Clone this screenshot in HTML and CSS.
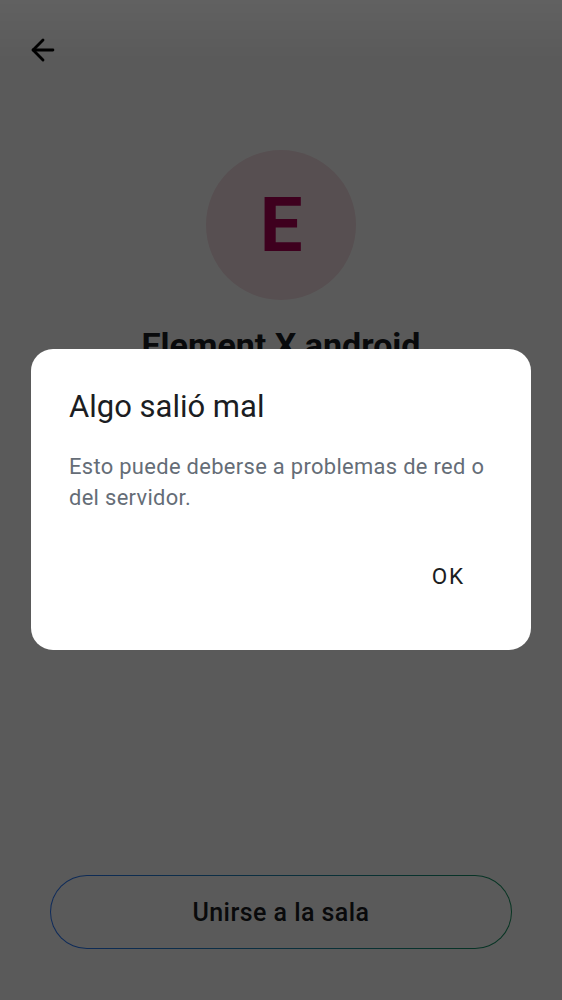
FILE: index.html
```html
<!DOCTYPE html>
<html lang="es">
<head>
<meta charset="utf-8">
<title>Unirse a la sala</title>
<link rel="stylesheet" href="styles.css">
</head>
<body>
<div class="screen">
  <header class="topbar">
    <button class="icon-btn" aria-label="Atrás">
      <svg viewBox="0 0 24 24" width="34" height="34" fill="none" stroke="#000" stroke-width="2" stroke-linecap="round" stroke-linejoin="round"><path d="M19 12H5"/><path d="M12 19l-7-7 7-7"/></svg>
    </button>
  </header>
  <div class="avatar"><span>E</span></div>
  <h1 class="room-name">Element X android</h1>
  <div class="spacer"></div>
  <button class="join-btn">Unirse a la sala</button>
</div>

<div class="scrim">
  <div class="dialog" role="alertdialog">
    <h2 class="dialog-title">Algo salió mal</h2>
    <p class="dialog-body">Esto puede deberse a problemas de red o del servidor.</p>
    <div class="dialog-actions">
      <button class="text-btn">OK</button>
    </div>
  </div>
</div>
</body>
</html>
```

FILE: styles.css
```css
* { box-sizing: border-box; }
html, body { margin: 0; padding: 0; }
body {
  width: 562px;
  height: 1000px;
  overflow: hidden;
  background: #ffffff;
  font-family: Roboto, "Liberation Sans", sans-serif;
  color: #1b1d22;
}
button { font-family: inherit; }

.screen {
  height: 1000px;
  display: flex;
  flex-direction: column;
  align-items: center;
}

.topbar {
  width: 100%;
  height: 100px;
  padding: 33px 0 0 26px;
}
.icon-btn {
  border: 0;
  background: transparent;
  padding: 0;
  width: 34px;
  height: 34px;
  display: block;
}
.icon-btn svg { display: block; }

.avatar {
  margin-top: 50px;
  width: 150px;
  height: 150px;
  border-radius: 50%;
  background: #f6e0e5;
  display: flex;
  align-items: center;
  justify-content: center;
}
.avatar span {
  font-size: 76px;
  font-weight: 700;
  color: #b10055;
  line-height: 1;
}

.room-name {
  margin: 25px 0 0;
  font-size: 34px;
  line-height: 40px;
  font-weight: 700;
  color: #1b1d22;
}

.spacer { flex: 1; }

.join-btn {
  width: 462px;
  height: 74px;
  margin-bottom: 51px;
  border-radius: 37px;
  border: 1.5px solid transparent;
  background:
    linear-gradient(#ffffff, #ffffff) padding-box,
    linear-gradient(90deg, #2a78ff, #14945f) border-box;
  font-size: 25px;
  font-weight: 500;
  color: #1b1d22;
  letter-spacing: 0.45px;
}

.scrim {
  position: fixed;
  inset: 0;
  background: linear-gradient(rgba(0,0,0,0.62), rgba(0,0,0,0.647) 60px);
  display: flex;
  justify-content: center;
  align-items: flex-start;
  padding-top: 349px;
}

.dialog {
  width: 500px;
  height: 301px;
  background: #ffffff;
  border-radius: 22px;
  padding: 37.5px 38px 0 38px;
  display: flex;
  flex-direction: column;
}
.dialog-title {
  margin: 0;
  font-size: 31px;
  line-height: 40px;
  font-weight: 400;
  color: #1b1d22;
}
.dialog-body {
  margin: 24px 0 0;
  font-size: 21.9px;
  line-height: 31.25px;
  color: #656d77;
  letter-spacing: 0.33px;
}
.dialog-actions {
  margin-top: 31px;
  display: flex;
  justify-content: flex-end;
}
.text-btn {
  border: 0;
  background: transparent;
  height: 64px;
  padding: 0 28px 0 18px;
  font-size: 22.5px;
  font-weight: 400;
  color: #1b1d22;
  letter-spacing: 1.8px;
}
```
